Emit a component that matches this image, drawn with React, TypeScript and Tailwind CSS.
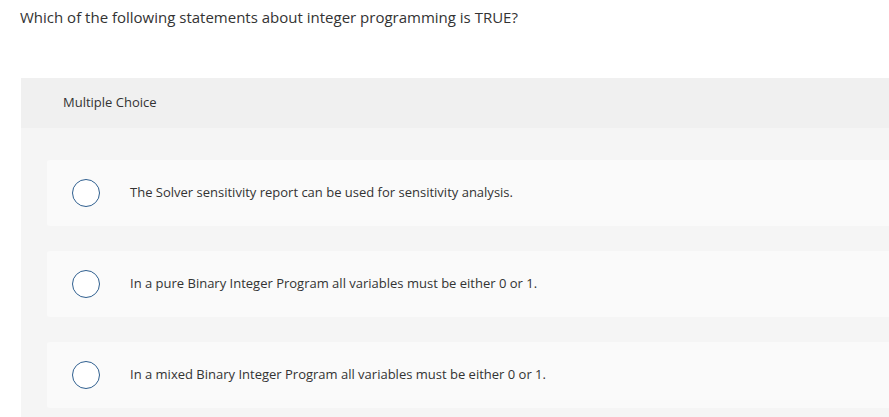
export default function App() {
  const options = [
    'The Solver sensitivity report can be used for sensitivity analysis.',
    'In a pure Binary Integer Program all variables must be either 0 or 1.',
    'In a mixed Binary Integer Program all variables must be either 0 or 1.',
  ]

  return (
    <div className="w-[889px] h-[417px] overflow-hidden bg-white text-[#333333]" style={{ fontFamily: '"Open Sans", Lato, sans-serif' }}>
      <p className="pl-[20px] pt-[7px] text-[15px] leading-[20px]">
        Which of the following statements about integer programming is TRUE?
      </p>

      <div className="ml-[21px] mt-[51px] w-[900px]">
        <div className="h-[50px] bg-[#f0f0f0] pl-[42px] flex items-center text-[13px]">
          Multiple Choice
        </div>
        <div className="bg-[#f5f5f5] pl-[26px] pt-[32px] pb-[10px] flex flex-col gap-[25px]">
          {options.map((opt) => (
            <div key={opt} className="h-[66px] bg-[#fafafa] rounded-[3px] flex items-center">
              <span className="ml-[25px] w-[28px] h-[28px] rounded-full border-[1.5px] border-[#2f5f8f] bg-white shrink-0" />
              <span className="ml-[30px] text-[13px]">{opt}</span>
            </div>
          ))}
        </div>
      </div>
    </div>
  )
}
